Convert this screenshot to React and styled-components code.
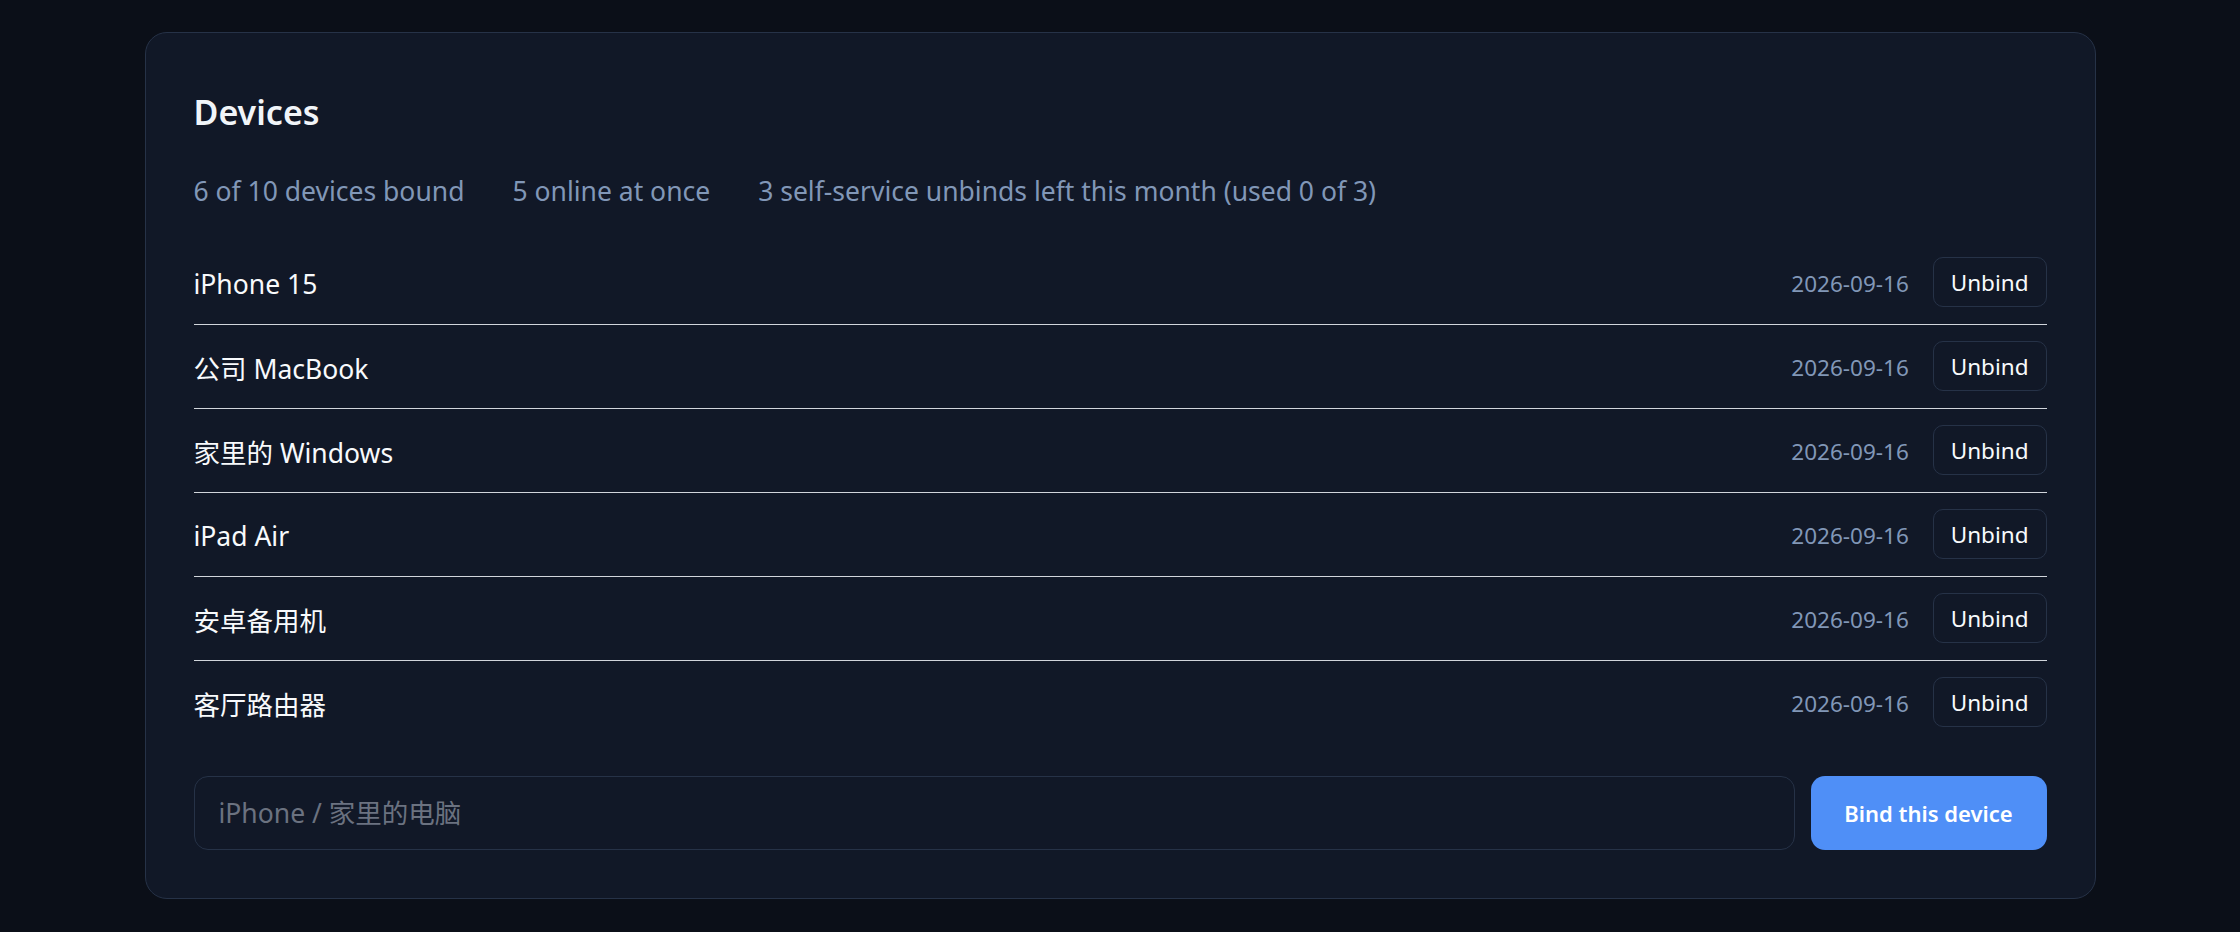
import styled, { createGlobalStyle } from 'styled-components';

const GlobalStyle = createGlobalStyle`
    html, body {
        margin: 0;
        padding: 0;
        background: #0b0f18;
    }
    body {
        font-family: "Noto Sans", "Noto Sans CJK SC", sans-serif;
        color: #f3f4f6;
    }
    * {
        box-sizing: border-box;
    }
`;

const Page = styled.div`
    min-height: 932px;
    padding-top: 32px;
`;

const Card = styled.section`
    width: 1951px;
    margin: 0 auto;
    background: #111827;
    border: 1px solid #263247;
    border-radius: 22px;
    padding: 48px;
`;

const Title = styled.h2`
    margin: 7px 0 0;
    font-size: 34px;
    line-height: 48px;
    font-weight: 600;
    color: #f1f5f9;
`;

// summary line
const Stats = styled.div`
    display: flex;
    gap: 48px;
    margin-top: 35px;
    font-size: 26.5px;
    line-height: 40px;
    color: #8197b7;
`;

const List = styled.div`
    margin-top: 30px;
`;

const Row = styled.div`
    display: flex;
    align-items: center;
    padding: 16px 0 17px;
    border-bottom: 1px solid #d1d5db;

    &:last-child {
        border-bottom: none;
    }
`;

const Name = styled.span`
    flex: 1;
    padding-top: 3px;
    font-size: 26.5px;
    color: #f8fafc;
`;

const Date = styled.span`
    padding-top: 2px;
    font-size: 22.5px;
    color: #8197b7;
    margin-right: 24px;
`;

const UnbindButton = styled.button`
    height: 50px;
    padding: 0 17px;
    background: transparent;
    border: 1px solid #263247;
    border-radius: 10px;
    font-family: inherit;
    font-size: 22.5px;
    color: #f8fafc;
    cursor: pointer;
`;

// bind form
const BindForm = styled.form`
    display: flex;
    gap: 16px;
    margin-top: 32px;
`;

const NameInput = styled.input`
    flex: 1;
    height: 74px;
    padding: 0 24px;
    background: #111827;
    border: 1px solid #263247;
    border-radius: 14px;
    font-family: inherit;
    font-size: 26.5px;
    color: #f3f4f6;
    outline: none;

    &::placeholder {
        color: #6b7280;
    }
`;

const BindButton = styled.button`
    width: 236px;
    height: 74px;
    background: #4f8ff7;
    border: none;
    border-radius: 14px;
    font-family: inherit;
    font-size: 22px;
    font-weight: 600;
    color: #fff;
    cursor: pointer;
`;

const devices = [
    { id: 1, name: 'iPhone 15', date: '2026-09-16' },
    { id: 2, name: '公司 MacBook', date: '2026-09-16' },
    { id: 3, name: '家里的 Windows', date: '2026-09-16' },
    { id: 4, name: 'iPad Air', date: '2026-09-16' },
    { id: 5, name: '安卓备用机', date: '2026-09-16' },
    { id: 6, name: '客厅路由器', date: '2026-09-16' },
];

const App = () => {
    return (
        <Page>
            <GlobalStyle />
            <Card>
                <Title>Devices</Title>
                <Stats>
                    <span>6 of 10 devices bound</span>
                    <span>5 online at once</span>
                    <span>3 self-service unbinds left this month (used 0 of 3)</span>
                </Stats>
                <List>
                    {devices.map(device => (
                        <Row key={device.id}>
                            <Name>{device.name}</Name>
                            <Date>{device.date}</Date>
                            <UnbindButton type="button">Unbind</UnbindButton>
                        </Row>
                    ))}
                </List>
                <BindForm onSubmit={e => e.preventDefault()}>
                    <NameInput placeholder="iPhone / 家里的电脑" />
                    <BindButton type="submit">Bind this device</BindButton>
                </BindForm>
            </Card>
        </Page>
    );
};

export default App;
